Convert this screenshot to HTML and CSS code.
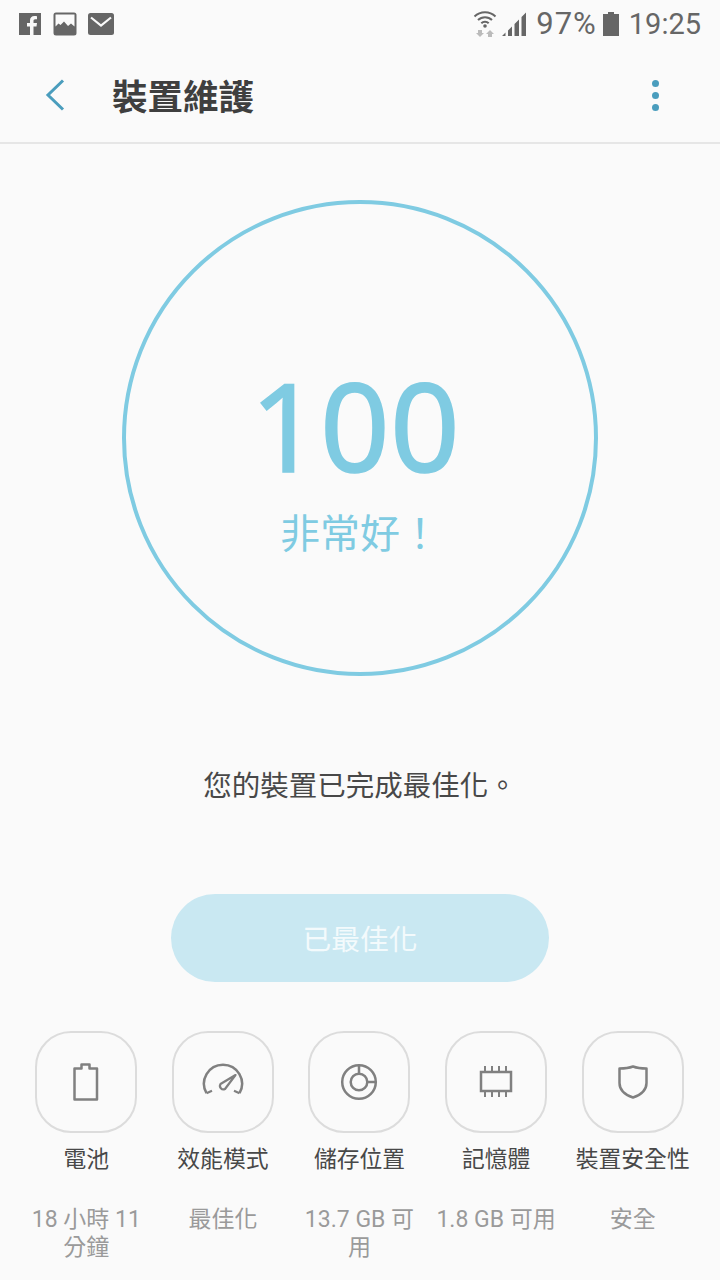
FILE: index.html
```html
<!DOCTYPE html>
<html lang="zh-Hant">
<head>
    <meta charset="UTF-8">
    <meta name="viewport" content="width=device-width, initial-scale=1.0">
    <title>裝置維護</title>
    <link rel="stylesheet" href="styles.css">
</head>
<body>
    <!-- Status bar -->
    <div class="status-bar">
        <div class="status-left">
            <svg class="st-icon" width="24" height="24" viewBox="0 0 24 24"><path fill="#666" d="M1 1h22v22h-7.500v-8.500h3l.5-3.500h-3.500V9c0-1 .4-1.700 1.800-1.700H19V4.200c-.5-.1-1.500-.2-2.600-.2-2.700 0-4.400 1.600-4.400 4.500V11H9v3.500h3V23H1z"/></svg>
            <svg class="st-icon" width="24" height="24" viewBox="0 0 24 24"><rect x="0.500" y="0.500" width="23" height="23" rx="2.500" fill="#666"/><path fill="#fafafa" d="M2.500 2.500h19v12l-3.500-3-3 2.500-4-4.500-3.500 3.500-2-1.500-3 3z"/></svg>
            <svg class="st-icon st-mail" width="26" height="22" viewBox="0 0 26 22"><rect x="0" y="0" width="26" height="22" rx="2.500" fill="#666"/><path fill="none" stroke="#fafafa" stroke-width="2.200" d="M3 4.500l10 8 10-8"/></svg>
        </div>
        <div class="status-right">
            <svg width="24" height="26" viewBox="0 0 24 26"><g fill="none" stroke="#666" stroke-width="2"><path d="M1.500 5.500a15 15 0 0 1 21 0"/><path d="M5 9a10 10 0 0 1 14 0"/><path d="M8.300 12.300a5.200 5.200 0 0 1 7.400 0"/></g><circle cx="12" cy="15" r="1.800" fill="#666"/><path fill="#bbb" d="M5 19h4v3h2l-4 4-4-4h2zM15 26v-3h-2l4-4 4 4h-2v3z"/></svg>
            <svg class="st-signal" width="24" height="24" viewBox="0 0 24 24"><path fill="#666" d="M0 24l3.500-3.500V24zM6 18.500l4-4V24H6zM12.500 12L17 7.500V24h-4.500zM19.500 5L24 .5V24h-4.500z"/></svg>
            <span class="st-text st-pct">97%</span>
            <svg class="st-batt" width="16" height="24" viewBox="0 0 16 24"><path fill="#666" d="M5 0h6v2h5v22H0V2h5z"/></svg>
            <span class="st-text st-time">19:25</span>
        </div>
    </div>

    <!-- Header -->
    <header class="app-bar">
        <svg class="back" width="20" height="32" viewBox="0 0 20 32"><path fill="none" stroke="#4a9dbd" stroke-width="3" d="M18 1.500L3 16l15 14.500"/></svg>
        <h1 class="title">裝置維護</h1>
        <div class="more"><i></i><i></i><i></i></div>
    </header>

    <main class="content">
        <div class="score-ring">
            <div class="score">100</div>
            <div class="score-label">非常好！</div>
        </div>
        <p class="message">您的裝置已完成最佳化。</p>
        <div class="optimized-btn">已最佳化</div>

        <div class="tiles">
            <div class="tile">
                <div class="tile-box">
                    <svg width="30" height="40" viewBox="0 0 30 40"><path fill="none" stroke="#808080" stroke-width="2.500" stroke-linejoin="round" d="M3 6.500h7V2.500h8v4h7.500v31H3z" transform="translate(.5 0)"/></svg>
                </div>
                <div class="tile-name">電池</div>
                <div class="tile-value">18 小時 11 分鐘</div>
            </div>
            <div class="tile">
                <div class="tile-box">
                    <svg width="44" height="38" viewBox="0 0 44 38"><g fill="none" stroke="#808080" stroke-width="2.500"><path d="M5.500 30.200A19 19 0 1 1 38.500 30.200"/><path d="M5.500 30.200l5.500-2.500M38.500 30.200l-5.500-2.500" stroke-width="2.200"/><path stroke-width="2.200" stroke-linejoin="round" d="M34.500 12L19.500 21a3.500 3.500 0 0 0 4.500 5z"/></g></svg>
                </div>
                <div class="tile-name">效能模式</div>
                <div class="tile-value">最佳化</div>
            </div>
            <div class="tile">
                <div class="tile-box">
                    <svg width="38" height="38" viewBox="0 0 38 38"><g fill="none" stroke="#808080" stroke-width="2.500"><circle cx="19" cy="19" r="16.800"/><circle cx="19" cy="19" r="8.300"/><path d="M19 2v9M27 19h9"/></g></svg>
                </div>
                <div class="tile-name">儲存位置</div>
                <div class="tile-value">13.7 GB 可用</div>
            </div>
            <div class="tile">
                <div class="tile-box">
                    <svg width="34" height="34" viewBox="0 0 34 34"><g fill="none" stroke="#808080"><rect x="2" y="7" width="30" height="19" stroke-width="2.500"/><path stroke-width="2" d="M6 1v5M13 1v5M20 1v5M27 1v5M6 27v5M13 27v5M20 27v5M27 27v5"/></g></svg>
                </div>
                <div class="tile-name">記憶體</div>
                <div class="tile-value">1.8 GB 可用</div>
            </div>
            <div class="tile">
                <div class="tile-box">
                    <svg width="30" height="34" viewBox="0 0 30 34"><path fill="none" stroke="#808080" stroke-width="2.500" stroke-linejoin="round" d="M1.500 3.500C7 3.500 11 3 15 1.500c4 1.500 8 2 13.500 2V18c0 7-6 12-13.500 14.500C7.500 30 1.500 25 1.500 18z"/></svg>
                </div>
                <div class="tile-name">裝置安全性</div>
                <div class="tile-value">安全</div>
            </div>
        </div>
    </main>
</body>
</html>
```

FILE: styles.css
```css
* {
    box-sizing: border-box;
}

body {
    margin: 0;
    width: 720px;
    height: 1280px;
    overflow: hidden;
    background-color: #fafafa;
    font-family: "Noto Sans CJK TC", "Noto Sans", sans-serif;
    color: #3f3f3f;
}

/* Status bar */
.status-bar {
    height: 48px;
    display: flex;
    justify-content: space-between;
    align-items: center;
    padding: 0 19px 0 18px;
}

.status-left {
    display: flex;
    align-items: center;
    gap: 11px;
}

.status-right {
    display: flex;
    align-items: center;
    color: #666;
}

.st-signal {
    margin-left: 5px;
}

.st-text {
    font-family: Roboto, sans-serif;
    font-size: 29px;
    line-height: 48px;
}

.st-pct {
    margin-left: 10px;
    font-size: 31px;
    letter-spacing: 1px;
}

.st-batt {
    margin-left: 6px;
}

.st-time {
    margin-left: 10px;
}

/* Header */
.app-bar {
    height: 96px;
    display: flex;
    align-items: center;
    padding: 0 0 0 45px;
    border-bottom: 2px solid #e6e6e6;
}

.back {
    flex: none;
}

.title {
    margin: 0 0 0 47px;
    font-size: 35.500px;
    font-weight: 700;
    line-height: 48px;
    color: #3f3f3f;
}

.more {
    margin-left: auto;
    margin-right: 61px;
    display: flex;
    flex-direction: column;
    gap: 5px;
}

.more i {
    display: block;
    width: 7px;
    height: 7px;
    border-radius: 50%;
    background-color: #4a9dbd;
}

/* Body */
.content {
    display: flex;
    flex-direction: column;
    align-items: center;
}

.score-ring {
    width: 476px;
    height: 476px;
    margin-top: 56px;
    border: 4px solid #7fcbe2;
    border-radius: 50%;
    display: flex;
    flex-direction: column;
    align-items: center;
    color: #7fcbe2;
}

.score {
    margin-top: 171px;
    margin-left: -10px;
    font-family: "Noto Sans", sans-serif;
    font-size: 122px;
    line-height: 100px;
    -webkit-text-stroke: 1.500px #7fcbe2;
}

.score-label {
    font-size: 40px;
    line-height: 52px;
    margin-top: 30px;
}

.message {
    margin: 90px 0 0;
    font-size: 28.500px;
    line-height: 36px;
    color: #484848;
}

.optimized-btn {
    width: 378px;
    height: 88px;
    margin-top: 92px;
    border-radius: 44px;
    background-color: #c9e8f2;
    color: #f3fafc;
    font-size: 28.800px;
    line-height: 88px;
    text-align: center;
}

/* Bottom tiles */
.tiles {
    width: 100%;
    margin-top: 49px;
    padding: 0 19px 0 18px;
    display: grid;
    grid-template-columns: repeat(5, 1fr);
}

.tile {
    display: flex;
    flex-direction: column;
    align-items: center;
    text-align: center;
}

.tile-box {
    width: 102px;
    height: 102px;
    border: 2px solid #dcdcdc;
    border-radius: 36px;
    display: flex;
    align-items: center;
    justify-content: center;
}

.tile-name {
    margin-top: 9px;
    font-size: 22.800px;
    line-height: 32px;
    color: #484848;
    white-space: nowrap;
}

.tile-value {
    margin-top: 32px;
    width: 128px;
    font-family: "Roboto", "Noto Sans CJK TC", sans-serif;
    font-size: 23px;
    line-height: 28px;
    color: #9a9a9a;
}
```
